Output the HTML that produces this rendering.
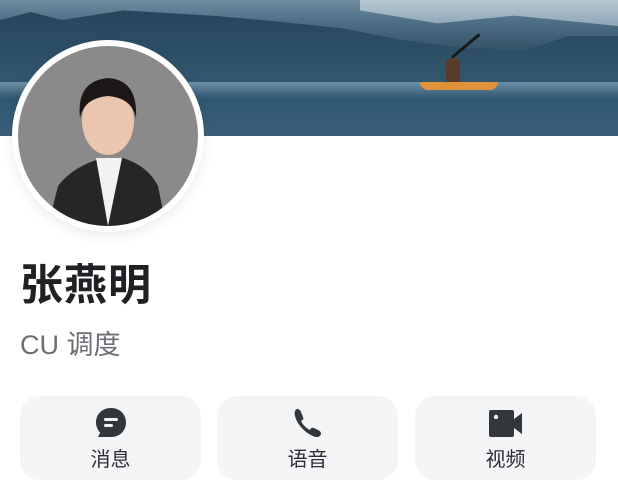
<!DOCTYPE html>
<html><head><meta charset="utf-8"><style>
*{margin:0;padding:0;box-sizing:border-box}
body{width:618px;height:500px;background:#fff;position:relative;overflow:hidden;font-family:"Liberation Sans","Noto Sans CJK SC",sans-serif}
.banner{position:absolute;left:0;top:0;width:618px;height:136px;overflow:hidden;
background:linear-gradient(180deg,#6f8ea2 0%,#4f7087 15%,#2e4f63 40%)}
.mtn{position:absolute;left:360px;top:0;width:258px;height:26px;background:linear-gradient(180deg,#b8c8d2,#8ea6b6);clip-path:polygon(0 0,100% 0,100% 100%,60% 60%,30% 90%,0 40%)}
.trees{position:absolute;left:0;top:4px;width:618px;height:80px;background:linear-gradient(180deg,#24445a,#33576e);clip-path:polygon(0 20%,5% 10%,10% 20%,20% 8%,35% 15%,45% 22%,55% 30%,65% 45%,75% 55%,85% 58%,92% 40%,100% 40%,100% 100%,0 100%)}
.water{position:absolute;left:0;top:82px;width:618px;height:54px;background:linear-gradient(180deg,#6e91a4,#2f5672 30%,#3a5f7b)}
.kayak{position:absolute;left:420px;top:82px;width:78px;height:8px;background:#e0923a;border-radius:0 0 10px 10px}
.av{position:absolute;left:12px;top:40px;width:192px;height:192px;border-radius:50%;background:#fff;box-shadow:0 4px 12px rgba(0,0,0,.08)}
.av .in{position:absolute;left:6px;top:6px;width:180px;height:180px;border-radius:50%;background:#8a8a8a;overflow:hidden}
.name{position:absolute;left:20px;top:251px;font-size:43px;font-weight:bold;color:#1f2124;letter-spacing:1px}
.title{position:absolute;left:20px;top:323px;font-size:27px;color:#6b6f75}
.btn{position:absolute;top:396px;width:181px;height:84px;background:#f4f5f7;border-radius:20px;text-align:center}
.btn svg{position:absolute;left:74px;top:10px}
.btn span{position:absolute;left:0;right:0;top:47px;font-size:20px;color:#2c2f33}
</style></head><body>
<div class="banner"><div class="mtn"></div><div class="trees"></div><div class="water"></div><div class="kayak"></div>
<div style="position:absolute;left:446px;top:58px;width:14px;height:24px;background:#5a3a2a;border-radius:6px 6px 2px 2px"></div>
<div style="position:absolute;left:452px;top:56px;width:36px;height:3px;background:#1a1a1a;transform:rotate(-40deg);transform-origin:left"></div>
</div>
<div class="av"><div class="in">
<svg width="180" height="180" viewBox="0 0 180 180">
<path d="M30 180 L40 140 Q55 120 85 112 L105 112 Q130 120 140 140 L148 180Z" fill="#262626"/>
<path d="M78 112 L90 180 L104 112Z" fill="#f2f2f2"/>
<ellipse cx="90" cy="75" rx="26" ry="34" fill="#e9c6ad"/>
<path d="M62 72 Q58 35 90 32 Q120 34 118 72 Q114 52 90 50 Q66 52 62 72Z" fill="#1c1616"/>
</svg></div></div>
<div class="name">张燕明</div>
<div class="title">CU 调度</div>
<div class="btn" style="left:20px"><svg width="34" height="34" viewBox="0 0 34 34"><path d="M17 2C25.8 2 32 8.3 32 16.5S25.8 31 17 31H4L6.2 26.5C3.4 23.8 2 20.3 2 16.5 2 8.3 8.2 2 17 2Z" fill="#33363b"/><rect x="10" y="12" width="14" height="3" rx="1.5" fill="#f4f5f7"/><rect x="10" y="18" width="9" height="3" rx="1.5" fill="#f4f5f7"/></svg><span>消息</span></div>
<div class="btn" style="left:217px"><svg width="34" height="34" viewBox="0 0 34 34"><path d="M6 3C4 4 3 6 4 10 6 18 13 26 22 30 26 32 29 31 30 28 30 26 29 25 27 24L23 22C21 21 20 22 19 24 15 22 12 19 10 15 12 14 13 13 12 11L10 6C9 4 8 3 6 3Z" fill="#33363b"/></svg><span>语音</span></div>
<div class="btn" style="left:415px"><svg width="34" height="34" viewBox="0 0 34 34"><rect x="0" y="4" width="25" height="27" rx="2" fill="#33363b"/><path d="M25 13L33 7V28L25 22Z" fill="#33363b"/><circle cx="7" cy="11" r="2.2" fill="#f4f5f7"/></svg><span>视频</span></div>
</body></html>
